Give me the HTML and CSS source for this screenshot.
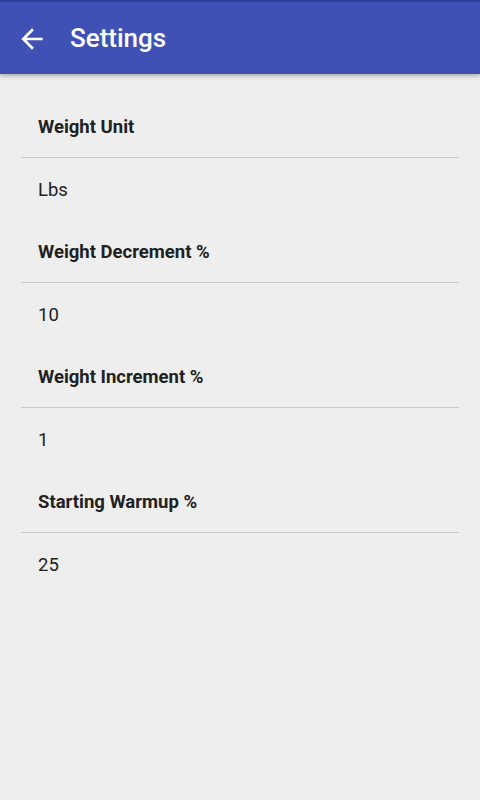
FILE: index.html
```html
<!DOCTYPE html>
<html>
<head>
<meta charset="utf-8">
<link rel="stylesheet" href="styles.css">
</head>
<body>
<header class="toolbar">
  <svg class="back" viewBox="0 0 24 24" width="32" height="32"><path fill="#fff" d="M20 11H7.83l5.59-5.59L12 4l-8 8 8 8 1.41-1.41L7.83 13H20v-2z"/></svg>
  <div class="title">Settings</div>
</header>
<main class="list">
  <div class="head">Weight Unit</div>
  <div class="value">Lbs</div>
  <div class="head">Weight Decrement %</div>
  <div class="value">10</div>
  <div class="head">Weight Increment %</div>
  <div class="value">1</div>
  <div class="head">Starting Warmup %</div>
  <div class="value">25</div>
</main>
</body>
</html>
```
FILE: styles.css
```css
html, body {
  margin: 0;
  padding: 0;
  background: #eeeeee;
  font-family: Roboto, "Noto Sans", sans-serif;
  color: #212121;
}
body {
  width: 480px;
  height: 800px;
  overflow: hidden;
}
.toolbar {
  height: 72px;
  border-top: 2px solid #30409a;
  background: #3f51b5;
  display: flex;
  align-items: center;
  box-shadow: 0 2px 4px rgba(0,0,0,0.28);
  position: relative;
  z-index: 1;
}
.back {
  margin-left: 16px;
  margin-top: 2px;
}
.title {
  margin-left: 22px;
  color: #fff;
  font-size: 26px;
  font-weight: 500;
  margin-top: 0;
}
.list {
  padding: 22px 21px 0;
  display: flex;
  flex-direction: column;
}
.head, .value {
  height: 62px;
  display: flex;
  align-items: center;
  padding-left: 17px;
  font-size: 18.5px;
}
.head {
  height: 61px;
  font-weight: 700;
  border-bottom: 1px solid #c8c8c8;
}
.value {
  font-weight: 400;
  height: 63px;
}
```
